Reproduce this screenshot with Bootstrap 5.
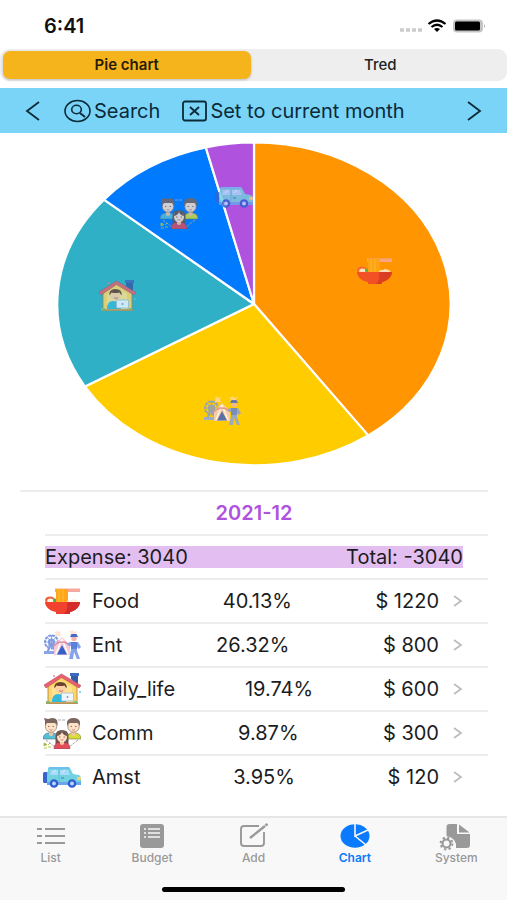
<!DOCTYPE html>
<html lang="en">
<head>
<meta charset="utf-8">
<meta name="viewport" content="width=device-width, initial-scale=1">
<title>Pie chart</title>
<link href="https://cdn.jsdelivr.net/npm/bootstrap@5.3.0/dist/css/bootstrap.min.css" rel="stylesheet">
<style>
body{font-family:Inter,"Liberation Sans",sans-serif;font-size:20px;line-height:22px;color:#1c1c1e;background:#fff}
svg{display:block;flex:none}
a{color:inherit;text-decoration:none}
.status{height:49px;padding:2px 21px 0 44px}
.clock{font-weight:600;color:#111}
.segments{background:#eee;border-radius:9px;height:32px;padding:2px 3px;gap:6px}
.segment{border:0;border-radius:7px;background:none;font-size:15px;line-height:18px;font-weight:500;color:#222;padding:0}
.segment.chosen{background:#f6b41c;font-weight:600;color:#2a1c00;box-shadow:0 1px 3px #0003}
.tools{background:#7ad4f8;height:45px;margin-top:7px;padding:0 24px;color:#0b2a38}
.tool{border:0;background:none;padding:0;color:inherit}
.tool.labelled{margin-left:22px;gap:2px}
.pie{width:100%;height:auto}
.ledger{margin:0 19px 0 20px}
.line{height:44px;border-top:2px solid #ededef;margin-left:25px;padding-right:25px}
.line.wide{margin-left:0;padding-right:0}
.month{font-size:20px;line-height:22px;color:#af52de;font-weight:600}
.totals{background:#e3bff1}
.entry-icon{margin-left:-2px}
.entry{margin:0 14px 0 11px}
.tabs{background:#f8f8f8;border-top:2px solid #e6e6e6;padding-top:5px;font-size:12px;line-height:14px;font-weight:500;color:#999}
.tab.on{color:#0a7aff;font-weight:600}
.home-bar{width:36%;height:5px;border-radius:3px;background:#000;margin:22px auto 8px}
</style>
<script src="https://cdn.jsdelivr.net/npm/bootstrap@5.3.0/dist/js/bootstrap.bundle.min.js" defer></script>
</head>
<body class="d-flex flex-column min-vh-100">
<svg width="0" height="0" class="position-absolute" aria-hidden="true">
  <symbol id="food" viewBox="0 0 38 32">
    <path d="M12 3.500h25V7H12z" fill="#f6a8a0"/>
    <ellipse cx="7" cy="15" rx="5" ry="3.500" fill="#f0603c"/><ellipse cx="7.500" cy="16" rx="3.300" ry="2.500" fill="#fff2df"/>
    <circle cx="12" cy="15.500" r="2" fill="#4caf50"/>
    <path d="M13 4h12v14H13z" fill="#ffa61a"/><path d="M16 4v14M20 4v14" stroke="#ffbd30" stroke-width="1.200"/>
    <path d="M24 17q1-3 4-2 3-2 5 0 3 0 2 2z" fill="#fff0dd"/>
    <path d="M2 17h35c0 5-5 9-10 10v2H13v-2C7 26 2 22 2 17z" fill="#f0422e"/>
    <path d="M24 17h13c0 5-5 9-10 10v2h-7c4-2 5-7 4-12z" fill="#d32c2b"/>
  </symbol>
  <symbol id="ent" viewBox="0 0 38 32">
    <path d="M14 1l1 2 3-1-1 3 2 2h-8l2-2-2-3 2 1zM30 1l1 2 3-1-1 3 2 1h-8l1-2-2-2h3z" fill="#ffdcca" opacity=".8"/>
    <g fill="none" stroke="#7f9ae0" stroke-width="2"><circle cx="8.500" cy="13" r="6.500" stroke-dasharray="3 .8"/><circle cx="8.500" cy="13" r="2.600"/><path d="M2 13h13M8.500 6v14M4 8l9 10M4 18l9-10" stroke-width=".9"/><path d="M8 15L4 24M9 15l4 9"/></g>
    <path d="M1 22h12v3H1z" fill="#88a5ea"/>
    <path d="M19 8l8 8v10H11V16z" fill="#f6cbd8"/><path d="M19 10l-6 15M19 10l6 15" stroke="#fff" stroke-width="1.500" fill="none"/>
    <path d="M19 16l5 9.500H14z" fill="#355ec7"/><path d="M11 17q3-4 8-4t8 4" fill="none" stroke="#e28ba0" stroke-width="1.500"/>
    <circle cx="31" cy="9.500" r="2.700" fill="#f5b4aa"/><path d="M27 8h8l-1.500-3h-5z" fill="#4269cb"/>
    <path d="M27 13h8l3 5-2 2-2-2v4l3 8h-3l-3-7-1 7h-4l2-9v-4l-4-1 1-2z" fill="#86a2e8"/><path d="M28 13h6v7h-6z" fill="#5c81da"/>
  </symbol>
  <symbol id="home" viewBox="0 0 38 32">
    <path d="M28 1h7v11l-7-6z" fill="#315ca8"/><path d="M27 0h9v3h-9z" fill="#3e6abf"/>
    <path d="M5 12L19 3l15 10v17H5z" fill="#ffd668" stroke="#a57a45" stroke-width=".8"/>
    <path d="M1 12L18.500 1 38 12.500l-2 2.500L18.500 4.500 3 15z" fill="#ec6070" stroke="#a3505e" stroke-width=".6"/>
    <path d="M9 29V14l9-6 11 6v15z" fill="#ffe391"/>
    <path d="M9 29q0-8 6-8 7 0 8 8z" fill="#36b8dd"/>
    <circle cx="17.500" cy="15.500" r="5" fill="#ffd0a8"/><path d="M11.500 15.500q-1-6.500 6-6.500 7 0 6 6.500l-2-3q-4 1-8 0z" fill="#6b412c"/>
    <path d="M16 17.500q2 2 4 0" fill="none" stroke="#985943" stroke-width=".7"/>
    <path d="M18.500 20h12v8h-12z" fill="#eff6ff" stroke="#9bb2cf" stroke-width=".7"/><circle cx="24.500" cy="24" r=".9" fill="#7294bd"/>
    <path d="M3 29.500h32v1.500H3z" fill="#b8935a"/><path d="M3 28h4v2H3zM31 28h3v2h-3z" fill="#7fbf7c"/><circle cx="11" cy="3" r=".9" fill="#ef7d8b"/><circle cx="37" cy="19" r=".9" fill="#50c5e7"/>
  </symbol>
  <symbol id="comm" viewBox="0 0 38 32">
    <path d="M15 3h8M3 23l9 7M35 23l-9 7" stroke="#a9a9a9" stroke-width="1" stroke-dasharray="3 1"/>
    <path d="M0 22q0-5 5-6h6q4 1 5 6z" fill="#55bfd7" stroke="#557481" stroke-width=".6"/><path d="M23 22q1-5 5-6h5q5 1 5 6z" fill="#d6dc3a" stroke="#747642" stroke-width=".6"/>
    <path d="M6 13h4v5q-2 2-4 0zM28.500 13h4v5q-2 2-4 0z" fill="#f5c4a2"/>
    <circle cx="8" cy="9.500" r="5.700" fill="#ffe1c8" stroke="#8d7769" stroke-width=".7"/><circle cx="30.500" cy="9.500" r="5.700" fill="#ffe1c8" stroke="#8d7769" stroke-width=".7"/>
    <path d="M2 9V4L1 1l4 1 4-1q5 0 5.500 4v4l-2-3h-9zM24 9V5q1-4 6.500-4T37 5v4l-2-3h-9z" fill="#7a665c"/>
    <path d="M12.500 27V19q0-6 6.500-6t6.500 6v8z" fill="#6c564e"/>
    <path d="M11 32q0-6 5-6.500h6q5 .5 5 6.500z" fill="#e14b5a" stroke="#80404a" stroke-width=".5"/><path d="M17 23h4v4q-2 2-4 0z" fill="#f5c4a2"/>
    <ellipse cx="19" cy="20" rx="5" ry="5.200" fill="#ffe1c8"/><path d="M14 19q4-1 5-4 1 3 5 4l-1-4h-8z" fill="#6c564e"/>
    <path d="M6.500 12.500q1.500 1.500 3 0M29 12.500q1.500 1.500 3 0M17.500 22.500q1.500 1.500 3 0" fill="none" stroke="#c0776b" stroke-width=".8"/>
    <path d="M5 9.500h1.500M9.500 9.500H11M27.500 9.500H29M32 9.500h1.500M16 20h1.500M20.500 20H22" stroke="#7b584c" stroke-width=".8"/>
    <path d="M1 26l3 1.500-3 1.500zM5 28l2-2M5 30l3 0M1 31h3" fill="#7ab85f" stroke="#b7c24a" stroke-width="1"/>
  </symbol>
  <symbol id="car" viewBox="0 0 38 32">
    <rect x="0" y="11" width="5" height="11" rx="1.500" fill="#3764d0"/>
    <path d="M7 6h18q2 0 3 3l2 4 6 1q2 1 2 4v6H4V14l1-6q.5-2 2-2z" fill="#72d2df"/>
    <path d="M7 6h18q1.500 0 2 2H5q.5-2 2-2z" fill="#6dbff2"/><path d="M8 9h7v5H7zM17 9h8l2 5H17z" fill="#a9d9fb"/><path d="M10 12l3-3M19 12l3-3" stroke="#d8f1ff"/>
    <path d="M4 21h34v3H4z" fill="#6aa6ee"/><path d="M16 8v13" stroke="#5cc0d0" stroke-width=".8"/><rect x="34" y="16" width="4" height="3" rx="1" fill="#f3d37b"/><path d="M18 17h3" stroke="#3382b5"/>
    <circle cx="11" cy="22.500" r="4.300" fill="#315fd0"/><circle cx="29" cy="22.500" r="4.300" fill="#315fd0"/><circle cx="11" cy="22.500" r="1.900" fill="#b9d9ff"/><circle cx="29" cy="22.500" r="1.900" fill="#b9d9ff"/>
  </symbol>
  <symbol id="more" viewBox="0 0 10 14"><path d="M1 2l7 5-7 5" fill="none" stroke="#bdbdc0" stroke-width="1.800"/></symbol>
</svg>

<header>
  <div class="status d-flex align-items-center justify-content-between">
    <span class="clock">6:41</span>
    <svg width="88" height="16" viewBox="0 0 88 16" aria-label="Wi-Fi, battery full" role="img">
      <path d="M2 12h4M8 12h4M14 12h4M20 12h4" stroke="#cbcbcb" stroke-width="3.500"/>
      <g fill="none" stroke="#000" stroke-width="2.200"><path d="M30.500 6q8.500-7 17 0M33.500 9q5.500-4.500 11 0"/></g><path d="M36 11q3-2.200 6 0l-3 3z"/>
      <rect x="55" y="1.500" width="30" height="13" rx="4" fill="#c4c4c4"/><rect x="57" y="3.500" width="25" height="9" rx="1.500"/><path d="M86 6v4q2-2 0-4z" fill="#aaa"/>
    </svg>
  </div>
  <div class="segments d-flex" role="group" aria-label="Chart type">
    <button type="button" class="segment chosen col" aria-pressed="true">Pie chart</button>
    <button type="button" class="segment col" aria-pressed="false">Tred</button>
  </div>
  <nav class="tools d-flex align-items-center" aria-label="Month">
    <button type="button" class="tool" aria-label="Previous month"><svg width="18" height="20" viewBox="0 0 18 20"><path d="M15 1L3 10l12 9" fill="none" stroke="currentColor" stroke-width="1.800"/></svg></button>
    <button type="button" class="tool labelled d-flex align-items-center"><svg width="28" height="24" viewBox="0 0 28 24" fill="none" stroke="currentColor" stroke-width="1.600"><ellipse cx="13.500" cy="12" rx="12.500" ry="10.500"/><ellipse cx="12.500" cy="10.500" rx="4.800" ry="4.200"/><path d="M16 14l5 4" stroke-width="2"/></svg><span>Search</span></button>
    <button type="button" class="tool labelled d-flex align-items-center"><svg width="26" height="22" viewBox="0 0 26 22" fill="none" stroke="currentColor" stroke-width="1.800"><rect x="1" y="1.500" width="23" height="19" rx="2"/><path d="M8 7l9 8M17 7l-9 8"/></svg><span>Set to current month</span></button>
    <button type="button" class="tool ms-auto" aria-label="Next month"><svg width="18" height="20" viewBox="0 0 18 20"><path d="M3 1l12 9-12 9" fill="none" stroke="currentColor" stroke-width="1.800"/></svg></button>
  </nav>
</header>

<main class="flex-grow-1">
  <svg class="pie" viewBox="0 0 507 357" role="img" aria-label="Expenses by category">
    <g stroke="#fff" stroke-width="2.200" stroke-linejoin="round">
      <path d="M254 171V9.500A197 161.500 0 0 1 368.200 302.400Z" fill="#ff9500"/>
      <path d="M254 171L368.200 302.400A197 161.500 0 0 1 85 253.600Z" fill="#fc0"/>
      <path d="M254 171L85 253.600A197 161.500 0 0 1 104 66.600Z" fill="#30b0c7"/>
      <path d="M254 171L104 66.600A197 161.500 0 0 1 205.800 14.400Z" fill="#007aff"/>
      <path d="M254 171L205.800 14.400A197 161.500 0 0 1 254 9.500Z" fill="#af52de"/>
    </g>
    <g opacity=".82">
      <use href="#food" x="355" y="122" width="38" height="32"/>
      <use href="#ent" x="203" y="262" width="38" height="32"/>
      <use href="#home" x="98" y="147" width="38" height="32"/>
      <use href="#comm" x="160" y="64" width="38" height="32"/>
      <use href="#car" x="215" y="48" width="38" height="32"/>
    </g>
  </svg>
  <section class="ledger" aria-label="Breakdown">
    <h1 class="line wide month mb-0 d-flex align-items-center justify-content-center">2021-12</h1>
    <div class="line d-flex align-items-center"><div class="totals d-flex justify-content-between w-100"><span>Expense: 3040</span><span>Total: -3040</span></div></div>
    <a href="#food-detail" class="line d-flex align-items-center"><svg class="entry-icon" width="38" height="32"><use href="#food"/></svg><span class="entry d-flex justify-content-between flex-grow-1"><span>Food</span><span>40.13%</span><span>$ 1220</span></span><svg width="10" height="14"><use href="#more"/></svg></a>
    <a href="#ent-detail" class="line d-flex align-items-center"><svg class="entry-icon" width="38" height="32"><use href="#ent"/></svg><span class="entry d-flex justify-content-between flex-grow-1"><span>Ent</span><span>26.32%</span><span>$ 800</span></span><svg width="10" height="14"><use href="#more"/></svg></a>
    <a href="#daily-detail" class="line d-flex align-items-center"><svg class="entry-icon" width="38" height="32"><use href="#home"/></svg><span class="entry d-flex justify-content-between flex-grow-1"><span>Daily_life</span><span>19.74%</span><span>$ 600</span></span><svg width="10" height="14"><use href="#more"/></svg></a>
    <a href="#comm-detail" class="line d-flex align-items-center"><svg class="entry-icon" width="38" height="32"><use href="#comm"/></svg><span class="entry d-flex justify-content-between flex-grow-1"><span>Comm</span><span>9.87%</span><span>$ 300</span></span><svg width="10" height="14"><use href="#more"/></svg></a>
    <a href="#amst-detail" class="line d-flex align-items-center"><svg class="entry-icon" width="38" height="32"><use href="#car"/></svg><span class="entry d-flex justify-content-between flex-grow-1"><span>Amst</span><span>3.95%</span><span>$ 120</span></span><svg width="10" height="14"><use href="#more"/></svg></a>
  </section>
</main>

<footer class="tabs">
  <nav class="d-flex text-center" aria-label="Sections">
    <a href="#list" class="tab col d-flex flex-column align-items-center"><svg width="30" height="28" viewBox="0 0 30 28" stroke="currentColor" stroke-width="2"><path d="M1 6h5M1 13h5M1 20h5M9 6h20M9 13h20M9 20h20"/></svg>List</a>
    <a href="#budget" class="tab col d-flex flex-column align-items-center"><svg width="26" height="28" viewBox="0 0 26 28"><rect x="1" y="1" width="24" height="24" rx="3" fill="currentColor"/><path d="M5 6h2M5 10h2M5 14h2M9 6h12M9 10h12M9 14h12" stroke="#f8f8f8" stroke-width="1.600"/></svg>Budget</a>
    <a href="#add" class="tab col d-flex flex-column align-items-center"><svg width="30" height="28" viewBox="0 0 30 28" fill="none" stroke="currentColor" stroke-width="1.900"><path d="M20 3H5Q2 3 2 6v14q0 3 3 3h17q3 0 3-3V9"/><path d="M11 15L26 3" stroke-width="2.400"/><path d="M26.500 2.500l2-1.500" stroke-width="2.600"/></svg>Add</a>
    <a href="#chart" class="tab on col d-flex flex-column align-items-center" aria-current="page"><svg width="30" height="28" viewBox="0 0 30 28"><ellipse cx="15" cy="13" rx="14.500" ry="11.800" fill="currentColor"/><path d="M15 0v13l13-6M15 13l11 9" fill="none" stroke="#f8f8f8" stroke-width="1.600"/></svg>Chart</a>
    <a href="#system" class="tab col d-flex flex-column align-items-center"><svg width="34" height="28" viewBox="0 0 34 28"><path d="M10.500 1H18v10h13v11q0 3-3 3H17q1-10-9.500-12V4q0-3 3-3z" fill="currentColor"/><path d="M20 1.500l10.500 8H20z" fill="currentColor"/><circle cx="7.500" cy="20.500" r="4" fill="none" stroke="currentColor" stroke-width="2.200"/><circle cx="7.500" cy="20.500" r="5.900" fill="none" stroke="currentColor" stroke-width="2" stroke-dasharray="2.300 2.330"/></svg>System</a>
  </nav>
  <div class="home-bar"></div>
</footer>
</body>
</html>
